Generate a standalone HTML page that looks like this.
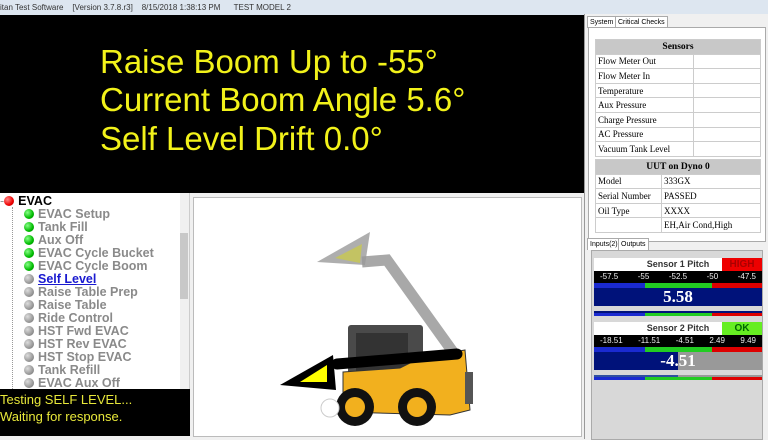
<!DOCTYPE html>
<html><head><style>
*{margin:0;padding:0;box-sizing:border-box}
body{width:768px;height:439px;overflow:hidden;background:#f0f0f0;font-family:"Liberation Sans",sans-serif;position:relative}
.abs{position:absolute}
#title{left:0;top:0;width:768px;height:15px;background:#dde6f0;font-size:8px;color:#333;padding:3px 0 0 0;white-space:pre}
#big{left:0;top:15px;width:585px;height:178px;background:#000}
#big div{position:absolute;left:100px;color:#f2f21a;font-size:33px;white-space:nowrap}
#tree{left:0;top:193px;width:190px;height:196px;background:#fff;border-right:1px solid #ccc}
.it{position:absolute;left:24px;font-size:12.5px;font-weight:bold;color:#8a8a8a;white-space:nowrap}
.it i{display:inline-block;width:10px;height:10px;border-radius:50%;margin-right:4px;vertical-align:-1px}
.g{background:radial-gradient(circle at 35% 35%,#8f8,#0b0 60%,#070)}
.s{background:radial-gradient(circle at 35% 35%,#ddd,#999 60%,#666)}
#msg{left:0;top:389px;width:190px;height:47px;background:#000;color:#e8e83a;font-size:13px;line-height:17px;padding:2px 0 0 0}
#canvas{left:193px;top:197px;width:389px;height:240px;background:#fff;border:1px solid #bbb}
#right{left:584px;top:14px;width:184px;height:425px;background:#f0f0f0;border-left:1px solid #999}
.tab{position:absolute;font-size:7px;background:#fff;border:1px solid #aaa;border-bottom:none;padding:2px 2px}
table{border-collapse:collapse;font-family:"Liberation Serif",serif;font-size:9px}
td{border:1px solid #ccc;height:14.6px;padding:0 2px;background:#fff}
.hd{background:#c8c8c8;text-align:center;font-weight:bold;font-size:9.5px}
.sens{position:absolute;left:594px;width:168px;background:#fff}
.sens .t{height:13px;font-size:9px;font-weight:bold;text-align:center;color:#333;line-height:13px;position:relative}
.sens .st{position:absolute;right:0;top:0;width:40px;height:13px;font-size:10px;text-align:center}
.sc{height:12px;background:#000;color:#eee;font-size:8px;display:flex;justify-content:space-between;padding:0 6px;line-height:12px}
.bar{height:5px;display:flex}
.val{height:18px;color:#fff;font-family:"Liberation Serif",serif;font-weight:bold;font-size:17px;text-align:center;line-height:18px}
</style></head><body>
<div id="title" class="abs">itan Test Software    [Version 3.7.8.r3]    8/15/2018 1:38:13 PM      TEST MODEL 2</div>
<div id="big" class="abs">
<div style="top:28px">Raise Boom Up to -55°</div>
<div style="top:66px">Current Boom Angle 5.6°</div>
<div style="top:105px">Self Level Drift 0.0°</div>
</div>
<div id="tree" class="abs">
<div class="abs" style="left:12px;top:14px;width:1px;height:182px;border-left:1px dotted #999"></div>
<div class="abs" style="left:180px;top:0;width:9px;height:196px;background:#f0f0f0"></div>
<div class="abs" style="left:180px;top:40px;width:8px;height:66px;background:#c8c8c8"></div>
<div class="it" style="left:0;top:1px;color:#000"><span style="color:#999;font-weight:normal">-</span><i style="background:radial-gradient(circle at 35% 35%,#f88,#e00 60%,#900)"></i>EVAC</div>
<div class="it" style="top:14px"><i class="g"></i>EVAC Setup</div>
<div class="it" style="top:27px"><i class="g"></i>Tank Fill</div>
<div class="it" style="top:40px"><i class="g"></i>Aux Off</div>
<div class="it" style="top:53px"><i class="g"></i>EVAC Cycle Bucket</div>
<div class="it" style="top:66px"><i class="g"></i>EVAC Cycle Boom</div>
<div class="it" style="top:79px"><i class="s"></i><span style="color:#1a1ad0;text-decoration:underline">Self Level</span></div>
<div class="it" style="top:92px"><i class="s"></i>Raise Table Prep</div>
<div class="it" style="top:105px"><i class="s"></i>Raise Table</div>
<div class="it" style="top:118px"><i class="s"></i>Ride Control</div>
<div class="it" style="top:131px"><i class="s"></i>HST Fwd EVAC</div>
<div class="it" style="top:144px"><i class="s"></i>HST Rev EVAC</div>
<div class="it" style="top:157px"><i class="s"></i>HST Stop EVAC</div>
<div class="it" style="top:170px"><i class="s"></i>Tank Refill</div>
<div class="it" style="top:183px"><i class="s"></i>EVAC Aux Off</div>
</div>
<div id="msg" class="abs">Testing SELF LEVEL...<br>Waiting for response.</div>
<div id="canvas" class="abs"></div>
<svg class="abs" style="left:0;top:0" width="768" height="439">
<polygon points="317,262 370,232 365,265" fill="#9a9a9a" opacity=".8"/>
<polygon points="335,258 362,244 360,263" fill="#c8c850" opacity=".8"/>
<polyline points="362,262 387,260 453,352" fill="none" stroke="#999" stroke-width="11" opacity=".85"/>
<rect x="348" y="325" width="75" height="52" rx="3" fill="#4a4a4a"/>
<rect x="356" y="333" width="52" height="40" fill="#333"/>
<path d="M343,372 L400,368 L420,358 L465,350 L470,410 L450,415 L343,412 Z" fill="#f2b01e" stroke="#333"/>
<rect x="465" y="372" width="8" height="32" fill="#555"/>
<circle cx="355" cy="407" r="19" fill="#111"/><circle cx="355" cy="407" r="10" fill="#f2b01e"/>
<circle cx="417" cy="407" r="19" fill="#111"/><circle cx="417" cy="407" r="10" fill="#f2b01e"/>
<circle cx="330" cy="408" r="9" fill="#fff" stroke="#ccc"/>
<line x1="337" y1="364" x2="457" y2="354" stroke="#000" stroke-width="11" stroke-linecap="round"/>
<polygon points="280,385 333,355 336,390" fill="#000"/>
<polygon points="300,382 327,365 327,382" fill="#ff0"/>
</svg>
<div id="right" class="abs">
<div class="tab" style="left:2px;top:2px">System</div>
<div class="tab" style="left:30px;top:2px">Critical Checks</div>
<div class="abs" style="left:3px;top:13px;width:178px;height:215px;background:#fff;border:1px solid #aaa"></div>
<table class="abs" style="left:10px;top:25px;width:166px">
<tr><td colspan="2" class="hd">Sensors</td></tr>
<tr><td style="width:98px">Flow Meter Out</td><td></td></tr>
<tr><td>Flow Meter In</td><td></td></tr>
<tr><td>Temperature</td><td></td></tr>
<tr><td>Aux Pressure</td><td></td></tr>
<tr><td>Charge Pressure</td><td></td></tr>
<tr><td>AC Pressure</td><td></td></tr>
<tr><td>Vacuum Tank Level</td><td></td></tr>
</table>
<table class="abs" style="left:10px;top:145px;width:166px">
<tr><td colspan="2" class="hd">UUT on Dyno 0</td></tr>
<tr><td style="width:66px">Model</td><td>333GX</td></tr>
<tr><td>Serial Number</td><td>PASSED</td></tr>
<tr><td>Oil Type</td><td>XXXX</td></tr>
<tr><td></td><td>EH,Air Cond,High</td></tr>
</table>
<div class="tab" style="left:2px;top:224px">Inputs(2)</div>
<div class="tab" style="left:33px;top:224px">Outputs</div>
<div class="abs" style="left:6px;top:236px;width:172px;height:190px;background:#d8d8d8;border:1px solid #aaa"></div>
</div>
<div class="sens" style="top:258px">
<div class="t">Sensor 1 Pitch<div class="st" style="background:#e00;color:#a00">HIGH</div></div>
<div class="sc"><span>-57.5</span><span>-55</span><span>-52.5</span><span>-50</span><span>-47.5</span></div>
<div class="bar"><div style="width:51px;background:#1a2ad0"></div><div style="width:67px;background:#2c2"></div><div style="flex:1;background:#d00"></div></div>
<div class="val" style="background:#00127a">5.58</div>
<div style="height:5px;background:#d8d8d8"></div>
<div style="height:2px;background:#00127a"></div>
<div class="bar" style="height:3px"><div style="width:51px;background:#1a2ad0"></div><div style="width:67px;background:#2c2"></div><div style="flex:1;background:#d00"></div></div>
</div>
<div class="sens" style="top:322px">
<div class="t">Sensor 2 Pitch<div class="st" style="background:#6e2;color:#060">OK</div></div>
<div class="sc"><span>-18.51</span><span>-11.51</span><span>-4.51</span><span>2.49</span><span>9.49</span></div>
<div class="bar"><div style="width:51px;background:#1a2ad0"></div><div style="width:67px;background:#2c2"></div><div style="flex:1;background:#d00"></div></div>
<div class="val" style="background:linear-gradient(90deg,#00127a 50%,#999 50%)">-4.51</div>
<div style="height:5px;background:#d8d8d8"></div>
<div style="height:2px;background:linear-gradient(90deg,#3050a0 50%,#999 50%)"></div>
<div class="bar" style="height:3px"><div style="width:51px;background:#1a2ad0"></div><div style="width:67px;background:#2c2"></div><div style="flex:1;background:#d00"></div></div>
</div>
</body></html>
